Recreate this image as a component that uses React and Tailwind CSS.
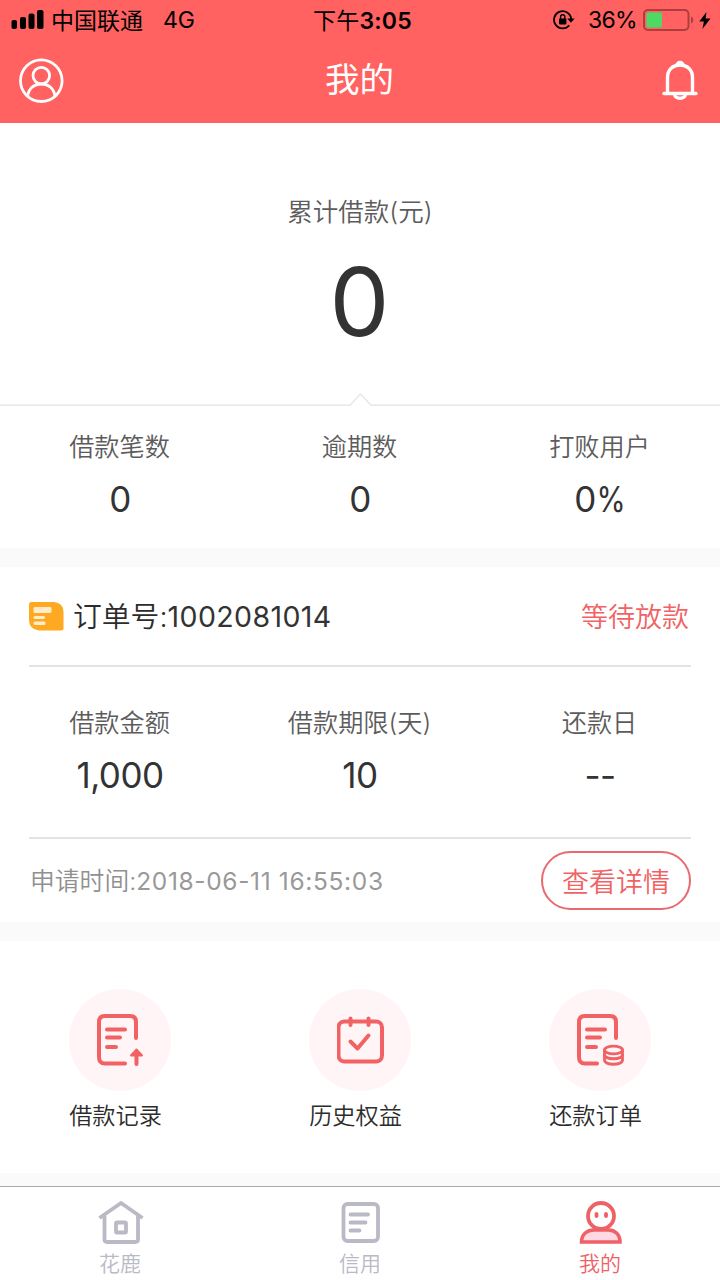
import React from 'react'

const StatusBar = () => (
  <div className="flex h-10 items-center text-black">
    <div className="flex flex-1 items-center pl-[11px]">
      <svg width="33" height="20" viewBox="0 0 33 20" fill="currentColor">
        <rect x="0.5" y="10" width="5.5" height="9" rx="2" />
        <rect x="9" y="7" width="6" height="12" rx="2" />
        <rect x="17.5" y="3.5" width="6" height="15.5" rx="2" />
        <rect x="26" y="0" width="6.5" height="19" rx="2" />
      </svg>
      <span className="ml-[7px] pt-[2px] text-[23px]">中国联通</span>
      <span className="ml-5 pt-[1px] text-[23px]">4G</span>
    </div>
    <div className="pt-[2px] pl-[3px] text-[23px] tracking-[0.2px]">下午<span className="font-semibold">3:05</span></div>
    <div className="flex flex-1 items-center justify-end pr-[9px]">
      <svg width="22" height="20" viewBox="0 0 22 20" fill="none" stroke="currentColor" strokeWidth="1.8">
        <path d="M16.3 15.2A8.6 8.6 0 1 1 18.2 9" />
        <path d="M14.2 8.5h7.4l-3.7 4.3z" fill="currentColor" stroke="none" />
        <rect x="6" y="8.6" width="7.4" height="5.8" rx="0.8" fill="currentColor" stroke="none" />
        <path d="M7.6 9V6.8a2.1 2.1 0 0 1 4.2 0V9" strokeWidth="1.4" />
      </svg>
      <span className="ml-[13px] pt-[1px] text-[23px] tracking-[-0.7px]">36%</span>
      <svg className="ml-[6px]" width="52" height="22" viewBox="0 0 52 22" fill="none">
        <rect x="1" y="1" width="44.5" height="20" rx="4" stroke="#a8403f" strokeWidth="2" />
        <rect x="3.5" y="3.5" width="15.5" height="15" rx="1.5" fill="#4cd964" />
        <path d="M48 7.5c3 1 3 6 0 7z" fill="#a8403f" />
      </svg>
      <svg className="ml-[4px]" width="12" height="17" viewBox="0 0 12 17" fill="currentColor">
        <path d="M7.5 0L0.3 9.5h4.6L3.4 17L11.5 6.6H6.6z" />
      </svg>
    </div>
  </div>
)

const Header = () => (
  <header className="h-[123px] bg-[#ff6260]">
    <StatusBar />
    <div className="flex h-20 items-center justify-between pr-[22px] pl-[19px] text-white">
      <svg width="45" height="45" viewBox="0 0 45 45" fill="none" stroke="currentColor" strokeWidth="2.8">
        <circle cx="22.3" cy="22.7" r="20.8" />
        <circle cx="22.3" cy="17.6" r="8.3" />
        <path d="M8.7 38.2C9.5 30.8 15 26 22.3 26s12.8 4.8 13.6 12.2" />
      </svg>
      <h1 className="pr-[7px] text-[34.5px] leading-none">我的</h1>
      <svg width="36" height="41" viewBox="0 0 36 41" fill="none" stroke="currentColor" strokeWidth="3.4">
        <path d="M5.5 33V17.5C5.5 9.5 11 5 18 5S30.5 9.5 30.5 17.5V33" />
        <path d="M2 33.5h32" strokeLinecap="round" />
        <path d="M13 5.5C14 -1 22 -1 23 5.5z" fill="currentColor" stroke="none" />
        <path d="M12.5 34.5c1 5 10 5 11 0" />
      </svg>
    </div>
  </header>
)

const Stat = ({ label, value }) => (
  <div className="flex flex-1 flex-col items-center">
    <span className="mr-[1px] text-[25.2px] leading-[30px] font-[350] text-[#5c5c5c]">{label}</span>
    <span className="mt-[16px] text-[35px] leading-[42px] tracking-[-0.5px] text-[#333]">{value}</span>
  </div>
)

const Summary = () => (
  <section className="bg-white">
    <div className="flex h-[270px] flex-col items-center pt-[74px]">
      <span className="text-[25.5px] leading-[30px] font-[350] text-[#5c5c5c]">累计借款(元)</span>
      <span className="mt-[26px] mr-[1px] text-[95px] leading-[98px] text-[#333]">0</span>
    </div>
    <svg className="block" width="720" height="13" viewBox="0 0 720 13" fill="none" stroke="#e8e8e8" strokeWidth="1.5">
      <path d="M0 12.2H350L360.5 1L371 12.2H720" />
    </svg>
    <div className="flex h-[142px] pt-[26px]">
      <Stat label="借款笔数" value="0" />
      <Stat label="逾期数" value="0" />
      <Stat label="打败用户" value={<>0<span className="-mx-[2px] inline-block scale-x-[0.85]">%</span></>} />
    </div>
  </section>
)

const Order = () => (
  <section className="mt-[19px] h-[355px] bg-white px-[29px]">
    <div className="flex h-[98px] items-center">
      <svg width="35" height="29" viewBox="0 0 35 29">
        <path d="M2.5 0H25Q34.5 1 34.5 10V26.5Q34.5 28.5 32.5 28.5H10Q0 27.5 0 18V2.5Q0 0 2.5 0z" fill="#ffa922" />
        <g fill="#ffecc9">
          <rect x="4.5" y="5" width="18" height="6" rx="1.5" />
          <rect x="4.5" y="14" width="11.5" height="3" rx="1.5" />
          <rect x="4.5" y="19.5" width="12" height="3.5" rx="1.5" />
        </g>
      </svg>
      <span className="ml-[9px] pt-[2px] text-[28.8px] font-[350] text-[#2c2c2c]">
        订单号:<span className="text-[28.5px] font-normal tracking-[0.4px] text-[#333]">1002081014</span>
      </span>
      <span className="mr-[2px] ml-auto pt-[5px] text-[27px] font-[350] text-[#f16264]">等待放款</span>
    </div>
    <div className="h-[174px] border-y-2 border-[#e4e4e4]">
      <div className="-mx-[29px] flex pt-[41px]">
        <Stat label="借款金额" value="1,000" />
        <Stat label="借款期限(天)" value="10" />
        <Stat label="还款日" value="--" />
      </div>
    </div>
    <div className="flex h-[83px] items-center justify-between">
      <span className="pt-[2px] pl-[1px] text-[24.8px] font-[350] text-[#909090]">
        申请时间:<span className="text-[24.5px] font-normal tracking-[0.65px] text-[#999]">2018-06-11 16:55:03</span>
      </span>
      <button className="h-[59px] w-[150px] rounded-full border-2 border-[#e86a70] pt-[5px] text-[27px] font-[350] text-[#f16264]">查看详情</button>
    </div>
  </section>
)

const RecordIcon = () => (
  <g>
    <path d="M39 24V8Q39 2 33 2H8Q2 2 2 8V43Q2 49.5 8 49.5H28" />
    <path d="M10 15.5H28M10 23.5H23M10 33H19" />
    <path d="M39.5 50V39" />
    <path d="M34 41.5L39.5 35.5L45 41.5z" fill="currentColor" strokeWidth="2" />
  </g>
)

const RightsIcon = () => (
  <g>
    <rect x="1.5" y="7.5" width="43.5" height="40" rx="6" />
    <path d="M13.5 4.5v6.5M31.5 4.5v6.5" />
    <path d="M13.5 27.500L20.500 34.500L31.500 21.500" />
  </g>
)

const RepayIcon = () => (
  <g>
    <path d="M39 24V8Q39 2 33 2H8Q2 2 2 8V43Q2 49.5 8 49.5H20" />
    <path d="M10 15.5H28M10 23.5H23M10 33H19" />
    <g strokeWidth="2.8">
      <ellipse cx="36.5" cy="36" rx="9" ry="3.8" />
      <path d="M27.5 41C29 46 44 46 45.5 41" />
      <path d="M27.5 36V46.5C29 51.5 44 51.5 45.5 46.5V36" />
    </g>
  </g>
)

const shortcuts = [
  { label: '借款记录', icon: <RecordIcon /> },
  { label: '历史权益', icon: <RightsIcon /> },
  { label: '还款订单', icon: <RepayIcon /> },
]

const Shortcuts = () => (
  <section className="mt-[19px] flex h-[232px] bg-white pt-[48px]">
    {shortcuts.map(({ label, icon }) => (
      <div key={label} className="flex flex-1 flex-col items-center">
        <div className="flex h-[102px] w-[102px] items-center justify-center rounded-full bg-[#fff5f6] pl-[1px] text-[#f16264]">
          <svg
            width="48"
            height="52"
            viewBox="0 0 48 52"
            fill="none"
            stroke="currentColor"
            strokeWidth="4"
            strokeLinecap="round"
            strokeLinejoin="round"
          >
            {icon}
          </svg>
        </div>
        <span className="mt-[10px] mr-[9px] text-[23.2px] leading-[30px] font-[350] text-[#2c2c2c]">{label}</span>
      </div>
    ))}
  </section>
)

const tabs = [
  {
    label: '花鹿',
    color: 'text-[#b9bac5]',
    icon: (
      <g strokeLinejoin="round">
        <path d="M1.5 18L23 3L44.5 18" />
        <path d="M6.5 16V39.5Q6.5 42 9 42H37Q40 42 40 39.5V16" />
        <rect x="18" y="22.5" width="10" height="10" rx="1" />
      </g>
    ),
  },
  {
    label: '信用',
    color: 'text-[#b9bac5]',
    icon: (
      <g strokeLinecap="round">
        <rect x="5.5" y="4" width="34.5" height="37" rx="4" />
        <path d="M12.5 14.5H30M12.5 22.5H27.5M12.5 30.5H21.5" />
      </g>
    ),
  },
  {
    label: '我的',
    color: 'text-[#ee6267]',
    icon: (
      <g>
        <path d="M3.5 42C3.5 34 9.5 30 15.5 30H30.5C36.5 30 42 34 42 42z" fill="#ffd9e2" strokeWidth="3.6" />
        <circle cx="23" cy="16" r="13" fill="#fff" />
        <g fill="currentColor" stroke="none">
          <ellipse cx="18.5" cy="15" rx="2" ry="3" />
          <ellipse cx="28" cy="15" rx="2" ry="3" />
        </g>
      </g>
    ),
  },
]

const TabBar = () => (
  <nav className="mt-[13px] flex h-[94px] border-t border-[#ababab] bg-white pt-[13px]">
    {tabs.map(({ label, color, icon }) => (
      <div key={label} className={`flex flex-1 flex-col items-center ${color}`}>
        <svg className="ml-[1px]" width="46" height="46" viewBox="0 0 46 46" fill="none" stroke="currentColor" strokeWidth="3.8">
          {icon}
        </svg>
        <span className="mt-[5px] text-[21px] leading-[26px] font-[350]">{label}</span>
      </div>
    ))}
  </nav>
)

const App = () => (
  <div className="min-h-[1280px] w-[720px] bg-[#fafafa] font-['Inter','Noto_Sans_CJK_SC',sans-serif]">
    <Header />
    <Summary />
    <Order />
    <Shortcuts />
    <TabBar />
  </div>
)

export default App
